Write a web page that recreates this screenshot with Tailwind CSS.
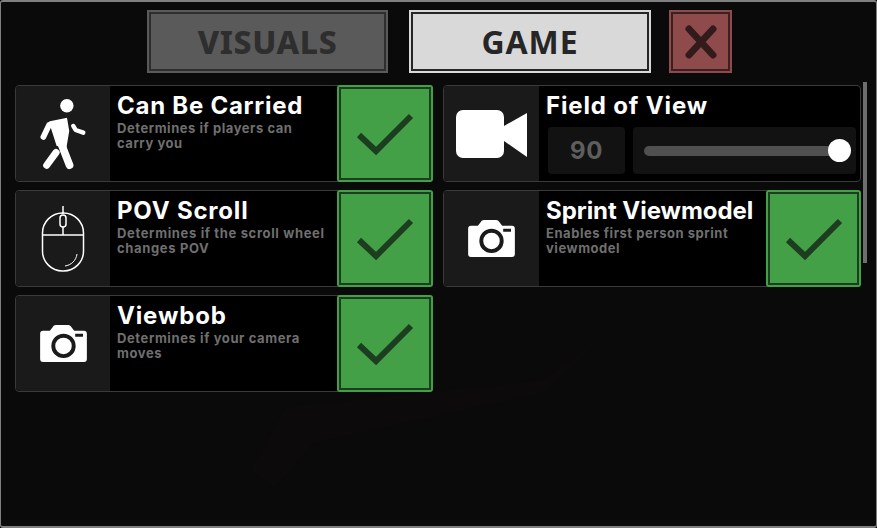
<!DOCTYPE html>
<html lang="en">
<head>
  <meta charset="UTF-8" />
  <title>Settings</title>
  <script src="https://cdn.jsdelivr.net/npm/@tailwindcss/browser@4"></script>
</head>
<body class="bg-black">
  <div class="relative w-[877px] h-[528px] overflow-hidden bg-[#0a0a0a] border border-y-2 border-[#808080] rounded-[3px] font-['Inter',sans-serif]">

    <!-- faint scene behind the menu -->
    <svg class="absolute left-0 top-0" width="877" height="528" fill="#0d0a0c"><path d="M249 469 285 405 542 378 600 335 545 390 313 441 274 486Z" /></svg>

    <!-- tabs -->
    <div class="relative flex pl-[146px] pt-[8px] h-[83px]">
      <button class="w-[241px] h-[63px] bg-[#5a5a5a] border-2 border-[#5a5a5a] outline-2 -outline-offset-4 outline-[#2e2e2e] text-[#2e2e2e] text-[32px] tracking-[.6px] font-extrabold font-['Noto_Sans',sans-serif]">VISUALS</button>
      <button class="w-[242px] h-[63px] ml-[21px] bg-[#d9d9d9] border-2 border-[#d9d9d9] outline-2 -outline-offset-4 outline-[#262626] text-[#262626] text-[32px] tracking-[.9px] font-bold font-['Noto_Sans',sans-serif]">GAME</button>
      <button class="w-[63px] h-[63px] ml-[18px] bg-[#8f4b4b] border-2 border-[#8f4b4b] outline-2 -outline-offset-4 outline-[#3a2020] flex items-center justify-center">
        <svg width="32" height="34" viewBox="0 0 32 34" fill="none" stroke="#331b1b" stroke-width="7" stroke-linecap="round"><path d="M4 4 28 30M28 4 4 30" /></svg>
      </button>
    </div>

    <div class="relative grid grid-cols-[418px_418px] gap-x-[10px] gap-y-[8px] pl-[14px]">

      <!-- Can Be Carried -->
      <div class="flex h-[97px] bg-black border border-[#3a3a3a] rounded-[4px]">
        <div class="w-[94px] shrink-0 bg-[#1a1a1a] rounded-l-[4px] flex items-center justify-center">
          <svg width="47" height="72" viewBox="120 52 140 214" fill="white" stroke="white" stroke-linecap="round" stroke-linejoin="round">
            <circle cx="200" cy="75" r="20" stroke="none" />
            <path d="M150 124 198 114 204 150 196 198 172 192Z" stroke-width="6" />
            <path d="M130 168 147 132" fill="none" stroke-width="17" />
            <path d="M184 190 208 252" fill="none" stroke-width="23" />
            <path d="M219 135 226 147 249 155" fill="none" stroke-width="13" />
            <path d="M140 252 168 214" fill="none" stroke-width="21" />
          </svg>
        </div>
        <div class="flex-1 pl-[7px] pt-[4px]">
          <h2 class="text-white text-[24px] leading-[31px] tracking-[.75px] font-bold">Can Be Carried</h2>
          <p class="text-[#6f6f6f] text-[13px] leading-[15px] tracking-[.55px] font-bold w-[210px]">Determines if players can carry you</p>
        </div>
        <div class="w-[96px] -my-px -mr-px shrink-0 bg-[#43a047] rounded-[3px] p-[2px]">
          <div class="h-full border-2 border-[#1d3d20] flex items-center justify-center">
            <svg width="58" height="46" viewBox="0 0 58 46" fill="none" stroke="#1d3d20" stroke-width="6"><path d="M3 24 20 40 55 5" /></svg>
          </div>
        </div>
      </div>

      <!-- Field of View -->
      <div class="flex h-[97px] bg-black border border-[#3a3a3a] rounded-[4px]">
        <div class="w-[95px] shrink-0 bg-[#1a1a1a] rounded-l-[4px] flex items-center justify-center">
          <svg width="71" height="48" viewBox="0 0 71 48" fill="white">
            <rect x="0" y="0" width="48" height="48" rx="7" />
            <path d="M48 16 71 3V47L48 31Z" />
          </svg>
        </div>
        <div class="flex-1 pl-[7px] pt-[4px] pr-[4px]">
          <h2 class="text-white text-[24px] leading-[31px] tracking-[.85px] font-bold">Field of View</h2>
          <div class="flex gap-[8px] mt-[6px] ml-[2px]">
            <div class="w-[77px] h-[47px] rounded-[4px] bg-[#121212] flex items-center justify-center text-[#5e5e5e] text-[24px] tracking-[.6px] font-bold">90</div>
            <div class="flex-1 h-[47px] rounded-[4px] bg-[#121212] flex items-center pl-[11px] pr-[5px]">
              <div class="flex-1 h-[10px] -mr-[4px] rounded-l-full bg-[#505050]"></div>
              <div class="relative w-[23px] h-[23px] rounded-full bg-white"></div>
            </div>
          </div>
        </div>
      </div>

      <!-- POV Scroll -->
      <div class="flex h-[97px] bg-black border border-[#3a3a3a] rounded-[4px]">
        <div class="w-[94px] shrink-0 bg-[#1a1a1a] rounded-l-[4px] flex items-center justify-center">
          <svg width="46" height="66" viewBox="0 0 46 66" fill="none" stroke="white" stroke-width="1.500">
            <rect x="2.500" y="7" width="41" height="58" rx="20" />
            <path d="M2.500 29H43.500M23 0V8M23 21V29" />
            <rect x="20" y="9" width="6" height="12" rx="3" />
            <path d="M37 48C36 55 31 59 25 60" stroke-width="1" />
          </svg>
        </div>
        <div class="flex-1 pl-[7px] pt-[4px]">
          <h2 class="text-white text-[24px] leading-[31px] tracking-[.8px] font-bold">POV Scroll</h2>
          <p class="text-[#6f6f6f] text-[13px] leading-[15px] tracking-[.65px] font-bold w-[215px]">Determines if the scroll wheel changes POV</p>
        </div>
        <div class="w-[96px] -my-px -mr-px shrink-0 bg-[#43a047] rounded-[3px] p-[2px]">
          <div class="h-full border-2 border-[#1d3d20] flex items-center justify-center">
            <svg width="58" height="46" viewBox="0 0 58 46" fill="none" stroke="#1d3d20" stroke-width="6"><path d="M3 24 20 40 55 5" /></svg>
          </div>
        </div>
      </div>

      <!-- Sprint Viewmodel -->
      <div class="flex h-[97px] bg-black border border-[#3a3a3a] rounded-[4px]">
        <div class="w-[95px] shrink-0 bg-[#1a1a1a] rounded-l-[4px] flex items-center justify-center">
          <svg width="47" height="37" viewBox="0 0 48 38" fill="white">
            <path fill-rule="evenodd" d="M3 6H10L13 2c.8-1.300 2-2 3-2H29c1 0 2 .7 3 2L35 6H45c2 0 3 1 3 3V35c0 2-1 3-3 3H3c-2 0-3-1-3-3V9C0 7 1 6 3 6ZM24 9A12.500 12.500 0 1 0 24 34 12.500 12.500 0 1 0 24 9ZM24 13A8.500 8.500 0 1 1 24 30 8.500 8.500 0 1 1 24 13ZM36 9V12H44V9Z" />
          </svg>
        </div>
        <div class="flex-1 pl-[7px] pt-[4px]">
          <h2 class="text-white text-[24px] leading-[31px] tracking-[-.05px] font-bold whitespace-nowrap">Sprint Viewmodel</h2>
          <p class="text-[#6f6f6f] text-[13px] leading-[15px] tracking-[.55px] font-bold w-[210px]">Enables first person sprint viewmodel</p>
        </div>
        <div class="w-[95px] -my-px -mr-px shrink-0 bg-[#43a047] rounded-[3px] p-[2px]">
          <div class="h-full border-2 border-[#1d3d20] flex items-center justify-center">
            <svg width="58" height="46" viewBox="0 0 58 46" fill="none" stroke="#1d3d20" stroke-width="6"><path d="M3 24 20 40 55 5" /></svg>
          </div>
        </div>
      </div>

      <!-- Viewbob -->
      <div class="flex h-[97px] bg-black border border-[#3a3a3a] rounded-[4px]">
        <div class="w-[94px] shrink-0 bg-[#1a1a1a] rounded-l-[4px] flex items-center justify-center">
          <svg width="47" height="37" viewBox="0 0 48 38" fill="white">
            <path fill-rule="evenodd" d="M3 6H10L13 2c.8-1.300 2-2 3-2H29c1 0 2 .7 3 2L35 6H45c2 0 3 1 3 3V35c0 2-1 3-3 3H3c-2 0-3-1-3-3V9C0 7 1 6 3 6ZM24 9A12.500 12.500 0 1 0 24 34 12.500 12.500 0 1 0 24 9ZM24 13A8.500 8.500 0 1 1 24 30 8.500 8.500 0 1 1 24 13ZM36 9V12H44V9Z" />
          </svg>
        </div>
        <div class="flex-1 pl-[7px] pt-[4px]">
          <h2 class="text-white text-[24px] leading-[31px] tracking-[.85px] font-bold">Viewbob</h2>
          <p class="text-[#6f6f6f] text-[13px] leading-[15px] tracking-[.6px] font-bold w-[210px]">Determines if your camera moves</p>
        </div>
        <div class="w-[96px] -my-px -mr-px shrink-0 bg-[#43a047] rounded-[3px] p-[2px]">
          <div class="h-full border-2 border-[#1d3d20] flex items-center justify-center">
            <svg width="58" height="46" viewBox="0 0 58 46" fill="none" stroke="#1d3d20" stroke-width="6"><path d="M3 24 20 40 55 5" /></svg>
          </div>
        </div>
      </div>
    </div>

    <!-- scrollbar -->
    <div class="absolute left-[862px] top-[80px] w-[4px] h-[181px] bg-[#6e6e6e]"></div>
  </div>
</body>
</html>
